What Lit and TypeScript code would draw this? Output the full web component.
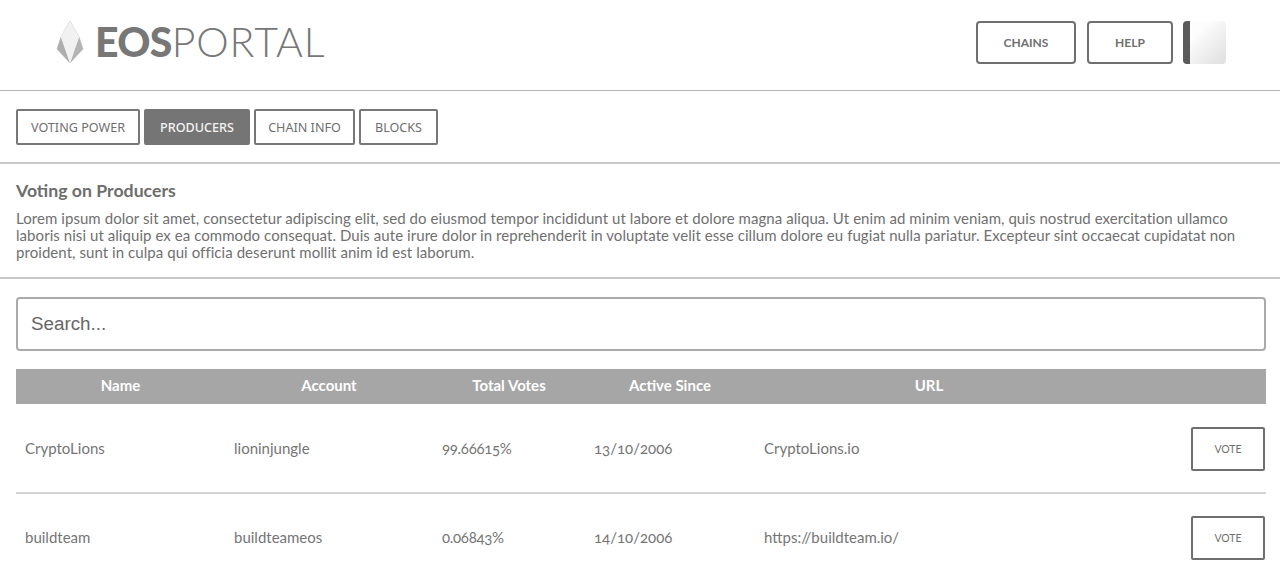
import { LitElement, html, css } from "lit";
import { customElement } from "lit/decorators.js";

const rows = [
  ["CryptoLions", "lioninjungle", "99.66615%", "13/10/2006", "CryptoLions.io"],
  ["buildteam", "buildteameos", "0.06843%", "14/10/2006", "https://buildteam.io/"],
];

@customElement("app-root")
export class AppRoot extends LitElement {
  static styles = css`
    :host { display: block; height: 572px; overflow: hidden; background: #fff; color: #6d6d6d; font-family: "Lato", "Noto Sans", sans-serif; }
    * { box-sizing: border-box; }
    .header { height: 91px; border-bottom: 1px solid #b4b4b4; display: flex; align-items: center; justify-content: space-between; padding: 0 54px 6px 56px; }
    .logo { display: flex; align-items: center; gap: 11px; }
    .wordmark { font-size: 41px; line-height: 44px; font-weight: 300; color: #777; letter-spacing: 0.9px; }
    .wordmark b { font-weight: 900; color: #777; letter-spacing: -0.7px; }
    .actions { display: flex; align-items: center; gap: 11px; }
    .hbtn { height: 43px; border: 2px solid #6f6f6f; border-radius: 4px; background: #fff; color: #6f6f6f; font: 700 12px "Lato", sans-serif; display: flex; align-items: center; justify-content: center; }
    .chains { width: 100px; }
    .help { width: 86px; }
    .avatar { width: 43px; height: 43px; margin-left: -1px; border-radius: 4px; border-left: 7px solid #5a5a5a; background: linear-gradient(135deg, #fdfdfd 25%, #dedede 100%); }
    .tabs { height: 73px; border-bottom: 2px solid #c8c8c8; display: flex; gap: 4px; padding: 18px 16px 0; }
    .tab { height: 36px; border: 2px solid #777; border-radius: 2px; background: #fff; color: #6f6f6f; font: 400 12.6px "Noto Sans", sans-serif; display: flex; align-items: center; justify-content: center; }
    .tab.active { background: #757575; color: #f4f4f4; font-weight: 500; border-color: #757575; }
    .intro { height: 115px; border-bottom: 2px solid #c8c8c8; padding: 17px 16px 0; }
    h2 { margin: 0; font-size: 17.7px; line-height: 20px; font-weight: 700; color: #6d6d6d; }
    p { margin: 9px 0 0; font-size: 15px; line-height: 17px; color: #707070; width: 1232px; letter-spacing: 0.06px; }
    .search { margin: 18px 14px 0 16px; height: 54px; border: 2px solid #aaa; border-radius: 4px; padding: 0 13px; display: flex; align-items: center; font: 400 18.8px "Liberation Sans", sans-serif; color: #666; }
    .thead, .row { display: grid; grid-template-columns: 209px 208px 152px 170px 348px 1fr; margin: 0 14px 0 16px; }
    .thead { margin-top: 18px; height: 35px; padding-bottom: 3px; background: #a6a6a6; color: #fff; font-size: 15px; font-weight: 700; align-items: center; text-align: center; }
    .thead + .row { margin-top: 1px; }
    .row { height: 89px; align-items: center; font-size: 15px; font-weight: 400; color: #757575; border-bottom: 2px solid #d4d4d4; font-variant-numeric: oldstyle-nums; }
    .row > span { padding-left: 9px; margin-top: -2px; }
    .row > span:nth-child(3) { letter-spacing: -0.3px; }
    .vote { justify-self: end; margin-right: 1px; width: 74px; height: 44px; border: 2px solid #6f6f6f; border-radius: 2px; background: #fff; color: #6f6f6f; font: 400 10.5px "Lato", sans-serif; display: flex; align-items: center; justify-content: center; }
  `;

  render() {
    const tabs: [string, number, boolean][] = [
      ["VOTING POWER", 124, false],
      ["PRODUCERS", 106, true],
      ["CHAIN INFO", 101, false],
      ["BLOCKS", 79, false],
    ];
    return html`
      <div class="header">
        <div class="logo">
          <svg width="28" height="42" viewBox="0 0 28 42" aria-hidden="true">
            <path d="M14 0 L5 16 L1 28 L14 42 L27 28 L23 16 Z" fill="none" stroke="#c4c4c4" stroke-width="0.8"/>
            <path d="M5 16 L1 28 L14 42 Z" fill="#aeaeae"/>
            <path d="M23 16 L27 28 L14 42 Z" fill="#b4b4b4"/>
            <path d="M14 0 L5 16 L14 42 L23 16 Z" fill="#f1f1f1"/>
          </svg>
          <div class="wordmark"><b>EOS</b>PORTAL</div>
        </div>
        <div class="actions">
          <div class="hbtn chains">CHAINS</div>
          <div class="hbtn help">HELP</div>
          <div class="avatar"></div>
        </div>
      </div>
      <div class="tabs">
        ${tabs.map(([t, w, a]) => html`<div class="tab ${a ? "active" : ""}" style="width:${w}px">${t}</div>`)}
      </div>
      <div class="intro">
        <h2>Voting on Producers</h2>
        <p>Lorem ipsum dolor sit amet, consectetur adipiscing elit, sed do eiusmod tempor incididunt ut labore et dolore magna aliqua. Ut enim ad minim veniam, quis nostrud exercitation ullamco laboris nisi ut aliquip ex ea commodo consequat. Duis aute irure dolor in reprehenderit in voluptate velit esse cillum dolore eu fugiat nulla pariatur. Excepteur sint occaecat cupidatat non proident, sunt in culpa qui officia deserunt mollit anim id est laborum.</p>
      </div>
      <div class="search">Search...</div>
      <div class="thead"><div>Name</div><div>Account</div><div>Total Votes</div><div>Active Since</div><div>URL</div><div></div></div>
      ${rows.map(r => html`<div class="row">${r.map(c => html`<span>${c}</span>`)}<div class="vote">VOTE</div></div>`)}
    `;
  }
}
